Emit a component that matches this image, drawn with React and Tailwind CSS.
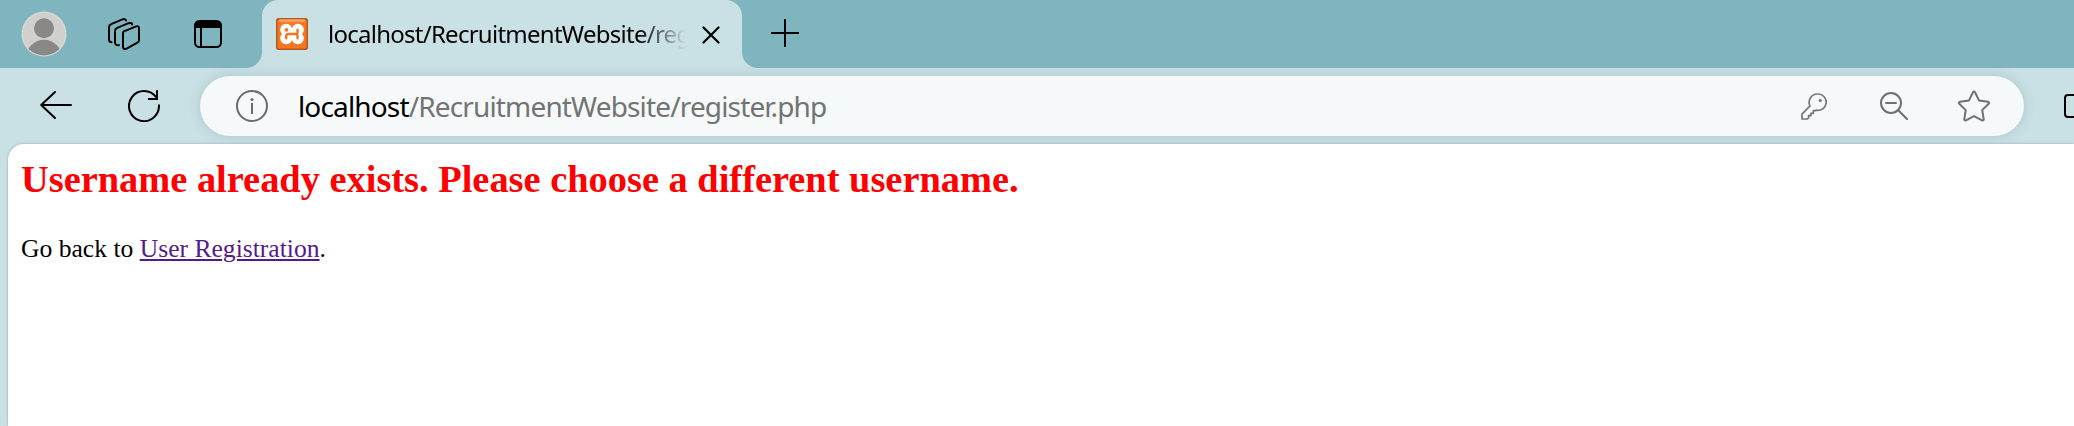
function Avatar() {
  return (
    <svg className="size-[46px]" viewBox="0 0 46 46">
      <defs>
        <clipPath id="avatar-clip">
          <circle cx="23" cy="23" r="21.5" />
        </clipPath>
      </defs>
      <circle cx="23" cy="23" r="22.5" fill="#dcdad7" />
      <circle cx="23" cy="23" r="21.2" fill="#d2d0ce" />
      <g clipPath="url(#avatar-clip)" fill="#8a8886">
        <circle cx="23" cy="17.3" r="10" />
        <circle cx="23" cy="47" r="18.2" />
      </g>
    </svg>
  );
}

function WorkspacesIcon() {
  return (
    <svg className="size-8" viewBox="0 0 32 32" fill="none" stroke="#000" strokeWidth="2" strokeLinecap="round" strokeLinejoin="round">
      <path d="M17.8 12.6 28.2 8.4c1.6-.6 2.8.1 2.8 1.7v12.2c0 1.1-.6 1.9-1.6 2.3L18.6 30.6c-1.8.8-3.6.2-3.6-1.6V15.2c0-1.2.9-2.2 2.8-2.6Z" />
      <path d="M7 24.5V13c0-1.5.8-2.5 2.2-3.1L20.500 5.200c1.800-.7 3.500-.2 3.700 1.300M7 24.500c0 2 1.500 3.200 4 2.500" />
      <path d="M1 21.500V9.200c0-1.500.8-2.500 2.200-3.100L14.500 1.400C16.200.7 17.600 1.200 18 2.600M1 21.500c0 1.700.8 2.800 2.600 2.800" />
    </svg>
  );
}

function TabActionsIcon() {
  return (
    <svg className="size-7" viewBox="0 0 28 28" fill="none" stroke="#000" strokeWidth="2">
      <rect x="1" y="1" width="26" height="26" rx="4.500" />
      <path d="M1 7.500V5a4 4 0 0 1 4-4h18a4 4 0 0 1 4 4v2.500Z" fill="#000" stroke="none" />
      <path d="M1 7H27M7 7V27" />
    </svg>
  );
}

function Favicon() {
  return (
    <svg className="size-8" viewBox="0 0 32 32">
      <defs>
        <linearGradient id="fav-top" x1="0" y1="0" x2="0" y2="1">
          <stop offset="0" stopColor="#fbb98a" />
          <stop offset="1" stopColor="#f37623" />
        </linearGradient>
      </defs>
      <rect width="32" height="32" rx="2.500" fill="#b5581b" />
      <rect x="1.500" y="1.500" width="29" height="29" rx="2" fill="#f37623" />
      <rect x="2.500" y="1.500" width="27" height="3.500" rx="1.500" fill="url(#fav-top)" />
      <g fill="#fff">
        <circle cx="10.200" cy="11.700" r="6" />
        <circle cx="10.200" cy="20.200" r="6" />
        <circle cx="21.800" cy="11.700" r="6" />
        <circle cx="21.800" cy="20.200" r="6" />
        <rect x="10" y="11" width="12" height="10" />
      </g>
      <circle cx="10.500" cy="11.800" r="1.900" fill="#f37623" />
      <path d="M10.200 20.300V18.200Q10.200 16 12.500 16H20M21.500 11.800V14.500Q21.500 16 19.500 16 21.500 16 21.500 17.500V20.300" fill="none" stroke="#f37623" strokeWidth="2.400" strokeLinecap="round" />
    </svg>
  );
}

function BrowserTab() {
  return (
    <div className="flex items-end h-[68px]">
      <div className="w-4 h-4 bg-[#c9e0e4]">
        <div className="size-4 rounded-br-2xl bg-[#7eb5bf]" />
      </div>
      <div className="w-[480px] h-[68px] rounded-t-2xl bg-[#c9e0e4] flex items-center pl-[14px]">
        <Favicon />
        <div className="ml-5 w-[358px] overflow-hidden whitespace-nowrap text-[24px] leading-8 tracking-[-0.74px] text-black font-['Noto_Sans',sans-serif] [mask-image:linear-gradient(to_right,#000_310px,transparent_358px)]">
          localhost/RecruitmentWebsite/register.php
        </div>
        <svg className="ml-4 mt-[2px] size-[18px]" viewBox="0 0 18 18" fill="none" stroke="#000" strokeWidth="2.200" strokeLinecap="round">
          <path d="M1.500 1.500 16.500 16.500M16.500 1.500 1.500 16.500" />
        </svg>
      </div>
      <div className="w-4 h-4 bg-[#c9e0e4]">
        <div className="size-4 rounded-bl-2xl bg-[#7eb5bf]" />
      </div>
    </div>
  );
}

function TabStrip() {
  return (
    <div className="flex items-center h-[68px] bg-[#7eb5bf] pl-[21px]">
      <Avatar />
      <div className="ml-[41px]"><WorkspacesIcon /></div>
      <div className="ml-[54px]"><TabActionsIcon /></div>
      <div className="ml-6"><BrowserTab /></div>
      <svg className="ml-[13px] mb-[2px] size-7" viewBox="0 0 28 28" fill="none" stroke="#000" strokeWidth="2">
        <path d="M14 0V28M0 14H28" />
      </svg>
    </div>
  );
}

function AddressBar() {
  return (
    <div className="ml-10 w-[1824px] h-[60px] shrink-0 rounded-full bg-[#f5f9fa] shadow-[0_0_12px_rgba(60,110,120,0.22)] flex items-center pl-9">
      <svg className="size-8 shrink-0" viewBox="0 0 32 32" fill="none" stroke="#6b6b6b" strokeWidth="2">
        <circle cx="16" cy="16" r="15" />
        <path d="M16 13V24" />
        <circle cx="16" cy="9.500" r="1.500" fill="#6b6b6b" stroke="none" />
      </svg>
      <div className="ml-[30px] flex whitespace-nowrap text-[28px] leading-9 font-['Noto_Sans',sans-serif]">
        <span className="text-black tracking-[-0.85px]">localhost</span>
        <span className="text-[#737373] tracking-[-0.85px]">/RecruitmentWebsite/register.php</span>
      </div>
      <div className="ml-auto flex items-center pr-[34px]">
        <svg className="size-7" viewBox="0 0 28 28" fill="none" stroke="#767676" strokeWidth="1.700" strokeLinejoin="round">
          <path d="M18 2a8.200 8.200 0 1 1-1.800 16.200l-.9.500h-2v2.600H11v2.300H8.600v2.200L7.300 27H2v-4.800l8-8.300A8.300 8.300 0 0 1 18 2Z" />
          <circle cx="20.300" cy="8.500" r="1.600" fill="#767676" stroke="none" />
        </svg>
        <svg className="ml-[52px] size-7" viewBox="0 0 28 28" fill="none" stroke="#707070" strokeWidth="2" strokeLinecap="round">
          <circle cx="11" cy="11" r="10" />
          <path d="M6 11H16M18.300 18.300 27 27" />
        </svg>
        <svg className="ml-[50px] size-8" viewBox="0 0 32 32" fill="none" stroke="#707070" strokeWidth="2" strokeLinejoin="round">
          <path d="M15 2.200c.4-.9 1.600-.9 2 0l4 8.200 9 1.300c1 .2 1.400 1.300.7 2l-6.500 6.400 1.500 9c.2 1-.8 1.700-1.700 1.200L16 26.100l-8 4.200c-.9.500-1.900-.2-1.700-1.200l1.500-9L1.300 13.700c-.7-.7-.3-1.800.7-2l9-1.300Z" />
        </svg>
      </div>
    </div>
  );
}

function Toolbar() {
  return (
    <div className="flex items-center h-[76px] bg-[#c9e0e4] pl-10">
      <svg className="size-8 shrink-0" viewBox="0 0 32 32" fill="none" stroke="#000" strokeWidth="2" strokeLinecap="round" strokeLinejoin="round">
        <path d="M31 15H1.200M15 2 1.200 15 15 28" />
      </svg>
      <svg className="ml-14 size-8 shrink-0" viewBox="0 0 32 32" fill="none" stroke="#000" strokeWidth="2">
        <path d="M31 14.500V16A15 15 0 1 1 28.300 7.500M29 0V9H20" />
      </svg>
      <AddressBar />
      <svg className="ml-10 h-6 w-[10px] shrink-0" viewBox="0 0 10 24" fill="none" stroke="#000" strokeWidth="2">
        <path d="M12 1H4a3 3 0 0 0-3 3V20a3 3 0 0 0 3 3H12" />
      </svg>
    </div>
  );
}

export default function App() {
  return (
    <div className="w-[2074px] h-[426px] overflow-hidden bg-[#c9e0e4] flex flex-col">
      <TabStrip />
      <Toolbar />
      <main className="ml-2 flex-1 rounded-tl-2xl bg-white shadow-[0_0_3px_rgba(60,110,120,0.4)] pl-[13px] pt-[13px] font-['Liberation_Serif',serif]">
        <h2 className="text-[38.4px] leading-[44px] font-bold text-[#ff0000] whitespace-nowrap">
          Username already exists. Please choose a different username.
        </h2>
        <p className="mt-[33px] text-[25.6px] leading-[30px] text-black">
          Go back to <a className="text-[#551a8b] underline underline-offset-[2px] decoration-2">User Registration</a>.
        </p>
      </main>
    </div>
  );
}
